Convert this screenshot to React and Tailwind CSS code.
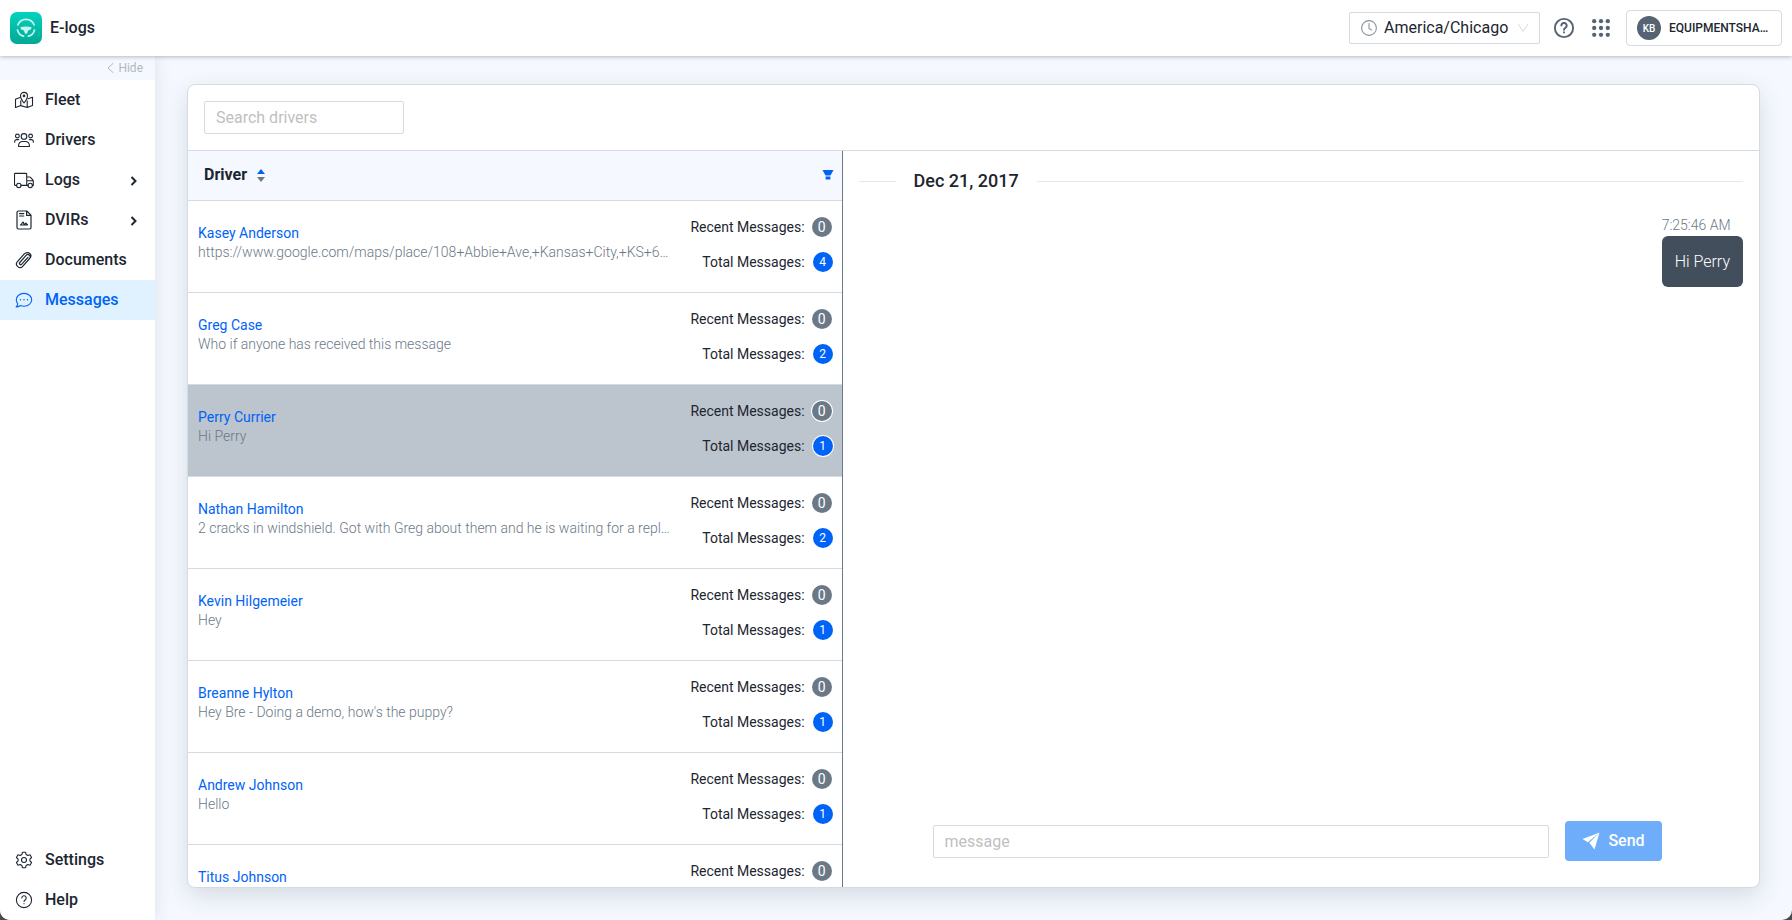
import React from "react";

const line = { fill: "none", stroke: "currentColor", strokeLinecap: "round", strokeLinejoin: "round" };

function Logo() {
  return (
    <svg viewBox="0 0 32 32" className="size-8 shrink-0" aria-hidden="true">
      <defs>
        <linearGradient id="logo-fill" x1="0" y1="0" x2="0" y2="1">
          <stop offset="0" stopColor="#04d3be" />
          <stop offset="1" stopColor="#03a893" />
        </linearGradient>
      </defs>
      <rect width="32" height="32" rx="7" fill="url(#logo-fill)" />
      <g fill="none" stroke="#c6f5ee" strokeWidth="1.7">
        <path d="M7.600 13.600a8.800 8.800 0 0 1 16.800 0" />
        <path d="M7.300 17.400a8.800 8.800 0 0 0 7 7" />
        <path d="M24.700 17.400a8.800 8.800 0 0 1-7 7" />
      </g>
      <path d="M10.300 15.300q5.700-1.600 11.400 0l-.8 2.200c-2 .2-2.800 1-3.200 2.100l-.7 2.200h-2l-.7-2.200c-.4-1.100-1.200-1.900-3.200-2.100z" fill="#c6f5ee" />
    </svg>
  );
}

function FleetIcon() {
  return (
    <svg viewBox="0 0 20 20" className="size-5" strokeWidth="1.1" {...line} aria-hidden="true">
      <path d="M10 13C8.200 10.600 6.500 8.300 6.500 5.900a3.500 3.500 0 0 1 7 0c0 2.400-1.700 4.700-3.500 7.100z" />
      <circle cx="10" cy="5.900" r=".8" />
      <path d="M6 7.600 1.500 9.200v8.300l5.300-1.900 6.400 1.900 5.300-1.900V7.200L14 8.700M6.800 10.800v4.800M13.200 10.800v6.700" />
    </svg>
  );
}

function DriversIcon() {
  return (
    <svg viewBox="0 0 20 20" className="size-5" strokeWidth="1.1" {...line} aria-hidden="true">
      <circle cx="10" cy="6.400" r="2.800" />
      <circle cx="3.400" cy="6" r="1.900" />
      <circle cx="16.600" cy="6" r="1.900" />
      <path d="M4.600 16.500v-1.200a3.800 3.800 0 0 1 3.800-3.800h3.200a3.800 3.800 0 0 1 3.800 3.800v1.200zM.7 12.200v-.6a2 2 0 0 1 2-2h1.900M19.300 12.200v-.6a2 2 0 0 0-2-2h-1.900" />
    </svg>
  );
}

function TruckIcon() {
  return (
    <svg viewBox="0 0 20 20" className="size-5" strokeWidth="1.100" {...line} aria-hidden="true">
      <path d="M2.400 15.400H1.300a.8.800 0 0 1-.8-.8V4.200c0-.5.4-.8.800-.8h10.600c.5 0 .8.300.8.800v11.200H7.200M12.700 7h3.100c.3 0 .5.100.7.300l2.500 2.900c.2.200.3.400.3.700v4.500h-.9M14.100 15.400h-1.400M12.700 10.700h6.400" />
      <circle cx="4.800" cy="15.400" r="2.200" />
      <circle cx="16.200" cy="15.400" r="2.200" />
    </svg>
  );
}

function DvirIcon() {
  return (
    <svg viewBox="0 0 20 20" className="size-5" strokeWidth="1.200" {...line} aria-hidden="true">
      <path d="M4.500 1h8.300L17 5.200V17.500A1.500 1.500 0 0 1 15.500 19h-11A1.500 1.500 0 0 1 3 17.500v-15A1.500 1.500 0 0 1 4.500 1zM12.600 1.200v4.200h4.200M5.500 3.600h4.300M5.500 6h4.300" />
      <path d="M6.400 15c1.500-.4 2-3 2.700-3 .8 0 .3 2.600 1.300 2.600.7 0 .8-1.400 1.500-1.400.6 0 .5 1.400 1.700 1.600z" />
    </svg>
  );
}

function ClipIcon() {
  return (
    <svg viewBox="0 0 20 20" className="size-5" strokeWidth="1.200" {...line} aria-hidden="true">
      <path d="m14 7.300-6.200 6.900a1.300 1.300 0 0 1-2-1.700l6.300-7.100a2.300 2.300 0 0 1 3.500 3.100l-6.900 7.800a3.500 3.500 0 0 1-5.300-4.600l6.900-7.800a4.100 4.100 0 0 1 3.700-1.300c2.300.4 3.600 2.700 2.600 4.700" />
    </svg>
  );
}

function ChatIcon() {
  return (
    <svg viewBox="0 0 20 20" className="size-5" strokeWidth="1.100" {...line} aria-hidden="true">
      <path d="M10 3.400c4.300 0 7.700 2.900 7.700 6.400s-3.400 6.400-7.700 6.400c-1.300 0-2.500-.3-3.600-.7-1.200.9-2.700 1.400-4.200 1.400.9-1 1.500-2 1.600-3.100-.9-1.100-1.500-2.500-1.500-4 0-3.500 3.400-6.400 7.700-6.400z" />
      <path d="M6.500 9.800h.01M10 9.800h.01M13.500 9.800h.01" strokeWidth="1.500" />
    </svg>
  );
}

function GearIcon() {
  return (
    <svg viewBox="0 0 20 20" className="size-5" strokeWidth="1.100" {...line} aria-hidden="true">
      <path d="M8.400 2.300h3.200l.5 2.200 1.700 1 2.200-.7 1.600 2.700-1.700 1.600v1.800l1.700 1.600-1.600 2.700-2.200-.7-1.700 1-.5 2.200H8.400l-.5-2.200-1.700-1-2.200.7-1.600-2.700 1.700-1.600V9.100L2.400 7.500 4 4.800l2.200.7 1.700-1z" />
      <circle cx="10" cy="10" r="2.500" />
    </svg>
  );
}

function HelpIcon({ className, strokeWidth }) {
  return (
    <svg viewBox="0 0 20 20" className={className} strokeWidth={strokeWidth} {...line} aria-hidden="true">
      <circle cx="10" cy="10" r="7.600" />
      <path d="M7.800 8a2.200 2.200 0 1 1 3.300 1.900c-.7.400-1.100.8-1.100 1.600M10 13.600v.1" />
    </svg>
  );
}

const nav = [
  { label: "Fleet", Icon: FleetIcon },
  { label: "Drivers", Icon: DriversIcon },
  { label: "Logs", Icon: TruckIcon, more: true },
  { label: "DVIRs", Icon: DvirIcon, more: true },
  { label: "Documents", Icon: ClipIcon },
  { label: "Messages", Icon: ChatIcon, active: true },
];

const footerNav = [
  { label: "Settings", Icon: GearIcon },
  { label: "Help", Icon: () => <HelpIcon className="size-5" strokeWidth="1.100" /> },
];

const drivers = [
  { name: "Kasey Anderson", text: "https://www.google.com/maps/place/108+Abbie+Ave,+Kansas+City,+KS+6…", recent: 0, total: 4 },
  { name: "Greg Case", text: "Who if anyone has received this message", recent: 0, total: 2 },
  { name: "Perry Currier", text: "Hi Perry", recent: 0, total: 1, selected: true },
  { name: "Nathan Hamilton", text: "2 cracks in windshield. Got with Greg about them and he is waiting for a repl…", recent: 0, total: 2 },
  { name: "Kevin Hilgemeier", text: "Hey", recent: 0, total: 1 },
  { name: "Breanne Hylton", text: "Hey Bre - Doing a demo, how's the puppy?", recent: 0, total: 1 },
  { name: "Andrew Johnson", text: "Hello", recent: 0, total: 1 },
  { name: "Titus Johnson", text: "", recent: 0 },
];

function NavLink({ label, Icon, more, active }) {
  return (
    <a
      href="#"
      aria-current={active ? "page" : undefined}
      className={
        active
          ? "flex h-10 items-center bg-[#e0f2ff] pr-4 pl-3.5 text-[#0063f7]"
          : "flex h-10 items-center pr-4 pl-3.5 text-[#1c2630]"
      }
    >
      <Icon />
      <span className="ml-[11px] flex-1 text-base font-medium">{label}</span>
      {more && (
        <svg viewBox="0 0 10 10" className="mt-0.5 size-2.5" fill="none" stroke="currentColor" strokeWidth="2" aria-hidden="true">
          <path d="m2.500 1 4 4-4 4" />
        </svg>
      )}
    </a>
  );
}

function Count({ label, value, tone, ringed }) {
  return (
    <div className="flex h-5 items-center justify-end">
      <span>{label}</span>
      <span
        className={
          (tone === "gray" ? "mr-px ml-[7px] bg-[#6b7987] text-sm " : "ml-2 bg-[#0063f7] text-xs ") +
          (ringed ? "ring-1 ring-white " : "") +
          "flex size-5 items-center justify-center rounded-full text-white"
        }
      >
        {value}
      </span>
    </div>
  );
}

export default function App() {
  return (
    <div className="h-screen bg-[#4b4a49] font-[Roboto,sans-serif] text-[#1c2630]">
      <div className="flex h-full flex-col overflow-hidden rounded-b-[10px] bg-[#f5f9ff]">
        <header className="relative z-10 flex h-14 shrink-0 items-center bg-white px-2.5 shadow-[0_1px_4px_rgba(28,38,48,0.3)]">
          <Logo />
          <h1 className="ml-2 flex-1 text-base font-medium">E-logs</h1>
          <div className="relative flex h-8 w-[191px] items-center rounded-xs border border-[#d3dce4]">
            <svg viewBox="0 0 16 16" className="pointer-events-none absolute left-[11px] size-4 text-[#8a94a0]" strokeWidth="1.100" {...line} aria-hidden="true">
              <circle cx="8" cy="8" r="7.400" />
              <path d="M8 3.600V8.500l2.600 1.400" />
            </svg>
            <select aria-label="Time zone" className="h-full w-full appearance-none bg-transparent pl-[34px] text-base outline-none">
              <option>America/Chicago</option>
            </select>
            <svg viewBox="0 0 10 8" className="pointer-events-none absolute right-[11px] h-2 w-2.5 text-[#d3dce4]" {...line} aria-hidden="true">
              <path d="m.5.500 4.500 7 4.500-7" />
            </svg>
          </div>
          <button type="button" aria-label="Help" className="ml-3 text-[#566372]">
            <HelpIcon className="size-6" strokeWidth="1.600" />
          </button>
          <button type="button" aria-label="Apps" className="ml-4 text-[#566372]">
            <svg viewBox="0 0 18 18" className="size-[18px]" fill="currentColor" aria-hidden="true">
              {[2.2, 9, 15.8].map((y) => [2.2, 9, 15.8].map((x) => <circle key={x + "-" + y} cx={x} cy={y} r="2.150" />))}
            </svg>
          </button>
          <button type="button" className="ml-4 flex h-9 w-[156px] items-center gap-2 rounded-sm border border-[#d3dce4] px-2.5">
            <span className="flex size-6 shrink-0 items-center justify-center rounded-full bg-[#566372] text-[10px] font-medium text-white">KB</span>
            <span className="truncate text-xs font-medium">EQUIPMENTSHA…</span>
          </button>
        </header>

        <div className="flex min-h-0 flex-1">
          <nav className="flex w-[155px] shrink-0 flex-col bg-white shadow-[0_0_16px_rgba(28,38,48,0.12)]">
            <button type="button" className="flex h-6 shrink-0 items-center justify-end gap-1 bg-[#f5f9ff] pr-3 text-xs text-[#b3b8bd]">
              <svg viewBox="0 0 7 12" className="h-3 w-[7px]" {...line} aria-hidden="true">
                <path d="M6 1.500 1 6l5 4.500" />
              </svg>
              Hide
            </button>
            <div className="flex-1">
              {nav.map((item) => <NavLink key={item.label} {...item} />)}
            </div>
            {footerNav.map((item) => <NavLink key={item.label} {...item} />)}
          </nav>

          <main className="flex min-w-0 flex-1 px-8 pt-7 pb-8">
            <section className="flex min-w-0 flex-1 flex-col overflow-hidden rounded-lg border border-[#d3dce4] bg-white shadow-[0_8px_24px_rgba(28,38,48,0.14)]">
              <div className="flex h-[66px] shrink-0 items-center border-b border-[#d3dce4] px-4">
                <input type="text" aria-label="Search drivers" placeholder="Search drivers" className="h-[33px] w-[200px] rounded-xs border border-[#d3dce4] px-[11px] text-base outline-none placeholder:text-[#bfbfbf]" />
              </div>
              <div className="flex min-h-0 flex-1">
                <div className="w-5/12 shrink-0 overflow-hidden border-r border-[#6b7987]">
                  <table className="w-full table-fixed border-separate border-spacing-0">
                    <thead>
                      <tr className="h-[50px] bg-[#f5f9ff]">
                        <th scope="col" className="border-b border-[#d3dce4] pr-2 pb-px pl-4 text-left">
                          <div className="flex items-center justify-between">
                            <button type="button" className="flex items-center gap-2.5 text-base font-bold">
                              Driver
                              <svg viewBox="0 0 8 13" className="h-[13px] w-2" aria-hidden="true">
                                <path d="M0 5h8L4 0z" fill="#0063f7" />
                                <path d="M0 8h8l-4 5z" fill="#6b7987" />
                              </svg>
                            </button>
                            <button type="button" aria-label="Filter drivers">
                              <svg viewBox="0 0 12 10" className="h-2.5 w-3" fill="#0063f7" aria-hidden="true">
                                <path d="M.5 0h11L8.500 5.500h-5zM3.600 6.500h4.800v3H3.600z" />
                              </svg>
                            </button>
                          </div>
                        </th>
                      </tr>
                    </thead>
                    <tbody>
                      {drivers.map((d) => (
                        <tr key={d.name} className={d.selected ? "h-[92px] bg-[#bcc4ce]" : "h-[92px]"}>
                          <td className="border-b border-[#d3dce4] pt-4 pr-[9px] pl-2.5 align-top">
                            <div className="flex justify-between gap-4 text-sm">
                              <div className="mt-[7px] min-w-0 flex-1 leading-[19px]">
                                <a href="#" className="block text-[#0063f7]">{d.name}</a>
                                <p className="truncate font-light text-[#6b7987]">{d.text}</p>
                              </div>
                              <div className="flex shrink-0 flex-col gap-[15px]">
                                <Count label="Recent Messages:" value={d.recent} tone="gray" ringed={d.selected} />
                                {d.total !== undefined && <Count label="Total Messages:" value={d.total} tone="blue" ringed={d.selected} />}
                              </div>
                            </div>
                          </td>
                        </tr>
                      ))}
                    </tbody>
                  </table>
                </div>

                <div className="flex min-w-0 flex-1 flex-col px-4">
                  <div className="mt-[18px] flex items-center">
                    <span className="h-px w-[37px] bg-[#e8e8e8]" />
                    <h2 className="px-[18px] text-lg leading-6 font-medium">Dec 21, 2017</h2>
                    <span className="h-px flex-1 bg-[#e8e8e8]" />
                  </div>
                  <div className="mt-[22px] flex flex-1 flex-col items-end">
                    <div>
                      <time className="mb-px block text-sm leading-5 font-light text-[#6b7987]">7:25:46 AM</time>
                      <p className="rounded-md bg-[#424e5b] px-[13px] py-[13px] text-base leading-[25px] font-light text-white">Hi Perry</p>
                    </div>
                  </div>
                  <form className="mb-[26px] flex items-center gap-4 pr-[81px] pl-[74px]">
                    <input type="text" aria-label="Message" placeholder="message" className="h-[33px] min-w-0 flex-1 rounded-xs border border-[#d9d9d9] px-[11px] text-base outline-none placeholder:text-[#bfbfbf]" />
                    <button type="button" className="flex h-10 w-[97px] shrink-0 items-center justify-center gap-2 rounded-sm bg-[#6dadfa] text-base font-medium text-white">
                      <svg viewBox="0 0 18 18" className="size-[18px]" fill="currentColor" aria-hidden="true">
                        <path d="M17.500.5.500 7l5.300 3.200zM17.500.500 7.300 10.800 12.500 17.500z" />
                      </svg>
                      Send
                    </button>
                  </form>
                </div>
              </div>
            </section>
          </main>
        </div>
      </div>
    </div>
  );
}
